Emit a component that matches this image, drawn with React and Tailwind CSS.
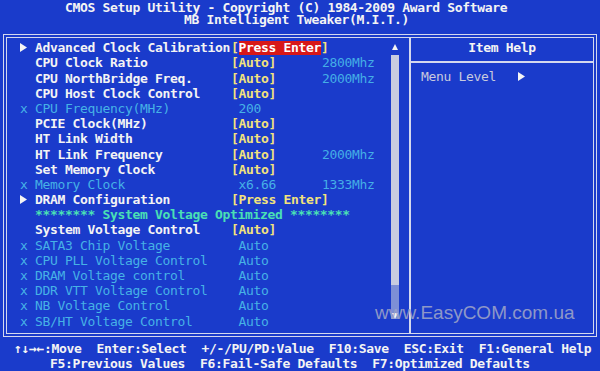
import React from "react";

const rows = [
  { mark: "arrow", label: "Advanced Clock Calibration", value: "press" },
  { label: "CPU Clock Ratio", value: "[Auto]", extra: "2800Mhz" },
  { label: "CPU NorthBridge Freq.", value: "[Auto]", extra: "2000Mhz" },
  { label: "CPU Host Clock Control", value: "[Auto]" },
  { mark: "x", label: "CPU Frequency(MHz)", value: " 200" },
  { label: "PCIE Clock(MHz)", value: "[Auto]" },
  { label: "HT Link Width", value: "[Auto]" },
  { label: "HT Link Frequency", value: "[Auto]", extra: "2000Mhz" },
  { label: "Set Memory Clock", value: "[Auto]" },
  { mark: "x", label: "Memory Clock", value: " x6.66", extra: "1333Mhz" },
  { mark: "arrow", label: "DRAM Configuration", value: "[Press Enter]" },
  { banner: "******** System Voltage Optimized ********" },
  { label: "System Voltage Control", value: "[Auto]" },
  { mark: "x", label: "SATA3 Chip Voltage", value: " Auto" },
  { mark: "x", label: "CPU PLL Voltage Control", value: " Auto" },
  { mark: "x", label: "DRAM Voltage control", value: " Auto" },
  { mark: "x", label: "DDR VTT Voltage Control", value: " Auto" },
  { mark: "x", label: "NB Voltage Control", value: " Auto" },
  { mark: "x", label: "SB/HT Voltage Control", value: " Auto" },
];

function Arrow({ className = "" }) {
  return (
    <svg width="7" height="9" viewBox="0 0 7 9" className={className}>
      <polygon points="0,0 7,4.5 0,9" fill="#f4f4f4" />
    </svg>
  );
}

function Row({ row }) {
  if (row.banner) {
    return (
      <div className="flex h-[15.2px] items-center whitespace-pre pl-[28px] text-[#4ae0b4]">
        {row.banner}
      </div>
    );
  }
  const off = row.mark === "x";
  return (
    <div className="flex h-[15.2px] items-center whitespace-pre pl-[13px]">
      <span className="flex w-[15px] items-center">
        {row.mark === "arrow" && <Arrow />}
        {off && <span className="text-[#46b2e6] font-normal">x</span>}
      </span>
      <span className={`w-[196px] ${off ? "text-[#46b2e6] font-normal" : "text-[#f4f4f4]"}`}>
        {row.label}
      </span>
      <span className={`w-[91px] ${off ? "text-[#46b2e6] font-normal" : "text-[#f2e27c]"}`}>
        {row.value === "press" ? (
          <>
            [<span className="inline-block bg-[#d81818] leading-[14px] text-white">Press Enter</span>]
          </>
        ) : (
          row.value
        )}
      </span>
      {row.extra && <span className="font-normal text-[#44aee6]">{row.extra}</span>}
    </div>
  );
}

export default function App() {
  return (
    <div className="relative h-[371px] w-[600px] overflow-hidden bg-[#1a3bcb] font-['DejaVu_Sans_Mono',monospace] text-[13px] tracking-[-0.33px] font-bold text-[#f4f4f4]">
      <div className="whitespace-pre pt-[2px]">
        <div className="pl-[65px] leading-[12px]">CMOS Setup Utility - Copyright (C) 1984-2009 Award Software</div>
        <div className="pl-[184px] leading-[12px]">MB Intelligent Tweaker(M.I.T.)</div>
      </div>

      <div className="mx-[3px] mt-[8px] flex h-[303px] border-[4px] border-double border-[#d4d8ee]">
        <div className="flex w-[402px]">
          <div className="flex-1 pt-[2.4px]">
            {rows.map((r, i) => (
              <Row key={i} row={r} />
            ))}
          </div>
          <div className="mr-[10px] flex w-[8px] flex-col items-center pt-[6px]">
            <svg width="6" height="6" viewBox="0 0 6 6">
              <polygon points="3,0 6,6 0,6" fill="#f4f4f4" />
            </svg>
            <div className="mt-[5px] h-[230px] w-[8px] bg-[#c8cce0]" />
            <div className="flex h-[34px] w-[8px] flex-col items-center justify-end bg-[#7d8fd6]">
              <svg width="6" height="6" viewBox="0 0 6 6">
                <polygon points="0,0 6,0 3,6" fill="#f4f4f4" />
              </svg>
            </div>
          </div>
        </div>
        <div className="flex-1 border-l-2 border-[#d4d8ee]">
          <div className="flex h-[25px] items-center justify-center border-b-2 border-[#d4d8ee] pb-[3px]">
            Item Help
          </div>
          <div className="flex items-center whitespace-pre pl-[10px] pt-[5.5px] leading-[15px] font-normal text-[#c8cade]">
            Menu Level{"   "}
            <Arrow />
          </div>
        </div>
      </div>

      <div className="mt-[4px] whitespace-pre leading-[15px]">
        <div className="pl-[14px]">↑↓→←:Move  Enter:Select  +/-/PU/PD:Value  F10:Save  ESC:Exit  F1:General Help</div>
        <div className="pl-[50px]">F5:Previous Values  F6:Fail-Safe Defaults  F7:Optimized Defaults</div>
      </div>

      <div className="absolute left-[375px] top-[302px] font-['Liberation_Sans',sans-serif] text-[19px] font-normal leading-[22px] tracking-normal text-[#9ba2c8] opacity-90">
        www.EasyCOM.com.ua
      </div>
    </div>
  );
}
